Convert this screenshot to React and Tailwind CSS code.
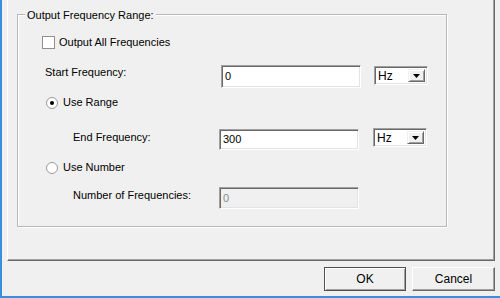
import React from "react";

const sunken =
    "border border-t-[#a0a0a0] border-l-[#a0a0a0] border-b-white border-r-white shadow-[inset_1px_1px_0_#696969,inset_-1px_-1px_0_#e3e3e3]";

const TextBox = ({ value, disabled, h = "h-[23px]" }) => (
    <div
        className={`${h} w-[140px] ${sunken} flex items-center pl-[3px] ${
            disabled ? "bg-[#f0f0f0] text-[#8a8a8a]" : "bg-white text-black"
        }`}
    >
        {value}
    </div>
);

const UnitSelect = () => (
    <div className={`h-[19px] w-[54px] ${sunken} bg-white flex items-stretch`}>
        <span className="flex-1 flex items-center pl-[3px] pt-[1px] text-[12px]">Hz</span>
        <span className="w-[17px] m-[2px] ml-0 bg-[#f0f0f0] border border-t-[#f0f0f0] border-l-[#f0f0f0] border-b-[#696969] border-r-[#696969] shadow-[inset_1px_1px_0_#fff,inset_-1px_-1px_0_#a0a0a0] flex items-center justify-center">
            <svg width="7" height="4" viewBox="0 0 7 4">
                <polygon points="0,0 7,0 3.5,4" fill="#000" />
            </svg>
        </span>
    </div>
);

const Radio = ({ checked }) => (
    <span className="w-[12px] h-[12px] rounded-full border border-[#9a9a9a] bg-white flex items-center justify-center">
        {checked && <span className="w-[4px] h-[4px] rounded-full bg-black" />}
    </span>
);

const Button = ({ label, isDefault }) => (
    <button
        className={`h-[24px] ${
            isDefault
                ? "w-[82px] border border-[#505050] shadow-[inset_1px_1px_0_#fff,inset_-1px_-1px_0_#a0a0a0]"
                : "w-[83px] border border-t-white border-l-white border-b-[#696969] border-r-[#696969] shadow-[inset_-1px_-1px_0_#a0a0a0]"
        } bg-[#f0f0f0] text-black text-[12px] flex items-center justify-center`}
    >
        {label}
    </button>
);

export default function App() {
    return (
        <div className="w-[500px] h-[298px] bg-[#f0f0f0] border-l-2 border-b-2 border-[#3b8de0] pl-[5px] pr-[5px] flex flex-col font-['Liberation_Sans',Arial,sans-serif] text-[11px] leading-[13px] text-black overflow-hidden">
            {/* tab page */}
            <div className="h-[261px] border-l border-l-white border-r border-b border-r-[#696969] border-b-[#696969] shadow-[inset_-1px_-1px_0_#a0a0a0] flex flex-col">
                {/* group box */}
                <div className="relative ml-[9px] mt-[14px] w-[430px] h-[213px] border border-[#b8b8b8] shadow-[inset_1px_1px_0_#fff,1px_1px_0_#fff] flex flex-col">
                    <span className="absolute left-[7px] -top-[6px] px-[2px] bg-[#f0f0f0]">
                        Output Frequency Range:
                    </span>

                    <div className="mt-[20px] pl-[24px] flex items-center gap-[4px] h-[14px]">
                        <span className="w-[13px] h-[13px] border border-[#8f8f8f] bg-white" />
                        <span>Output All Frequencies</span>
                    </div>

                    <div className="mt-[16px] pl-[27px] flex items-start">
                        <span className="w-[176px] pt-[1px]">Start Frequency:</span>
                        <TextBox value="0" />
                        <div className="ml-[13px] mt-[1px]">
                            <UnitSelect />
                        </div>
                    </div>

                    <div className="mt-[8px] pl-[28px] flex items-center gap-[5px] h-[13px]">
                        <Radio checked />
                        <span>Use Range</span>
                    </div>

                    <div className="mt-[20px] pl-[55px] flex items-start">
                        <span className="w-[146px] pt-[2px]">End Frequency:</span>
                        <TextBox value="300" h="h-[21px]" />
                        <div className="ml-[14px] -mt-[1px]">
                            <UnitSelect />
                        </div>
                    </div>

                    <div className="mt-[11px] pl-[28px] flex items-center gap-[5px] h-[13px]">
                        <Radio />
                        <span>Use Number</span>
                    </div>

                    <div className="mt-[13px] pl-[55px] flex items-start">
                        <span className="w-[146px] pt-[2px]">Number of Frequencies:</span>
                        <TextBox value="0" disabled h="h-[22px]" />
                    </div>
                </div>
            </div>

            <div className="mt-[6px] flex justify-end gap-[6px]">
                <Button label="OK" isDefault />
                <Button label="Cancel" />
            </div>
        </div>
    );
}
